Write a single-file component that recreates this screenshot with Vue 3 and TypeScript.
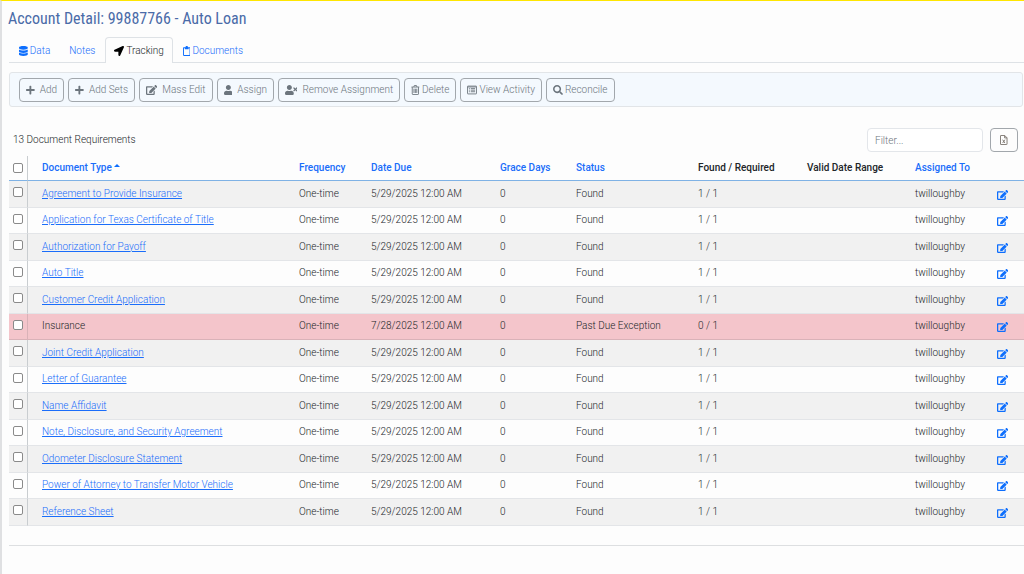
<script setup lang="ts">
import { computed, ref } from 'vue'

interface Icon {
  box: string
  path: string
  stroke?: boolean
}

interface Requirement {
  id: number
  name: string
  due: string
  status: string
  found: string
  exception: boolean
}

const icons: Record<string, Icon> = {
  database: {
    box: '0 0 448 512',
    path: 'M448 73v46C448 159 348 192 224 192S0 159 0 119V73C0 33 100 0 224 0s224 33 224 73zM448 176v103C448 319 348 352 224 352S0 319 0 279V176c48 33 136 49 224 49S400 209 448 176zm0 160v103C448 479 348 512 224 512S0 479 0 439V336c48 33 136 49 224 49S400 369 448 336z',
  },
  arrow: {
    box: '0 0 512 512',
    path: 'M444.52 3.52L28.74 195.42c-47.97 22.39-31.98 92.75 19.19 92.75h175.91v175.91c0 51.17 70.36 67.17 92.75 19.19l191.9-415.78c15.99-38.39-25.59-79.97-63.97-63.97z',
  },
  clipboard: {
    box: '0 0 384 512',
    path: 'M336 64h-80c0-35.3-28.7-64-64-64s-64 28.7-64 64H48C21.5 64 0 85.5 0 112v352c0 26.5 21.5 48 48 48h288c26.5 0 48-21.5 48-48V112c0-26.5-21.5-48-48-48zm-6 400H54c-3.3 0-6-2.7-6-6V118c0-3.3 2.7-6 6-6h42v36c0 6.6 5.4 12 12 12h168c6.6 0 12-5.4 12-12v-36h42c3.3 0 6 2.7 6 6v340c0 3.3-2.7 6-6 6z',
  },
  plus: {
    box: '0 0 448 512',
    path: 'M416 208H272V64c0-17.7-14.3-32-32-32h-32c-17.7 0-32 14.3-32 32v144H32c-17.7 0-32 14.3-32 32v32c0 17.7 14.3 32 32 32h144v144c0 17.7 14.3 32 32 32h32c17.7 0 32-14.3 32-32V304h144c17.7 0 32-14.3 32-32v-32c0-17.7-14.3-32-32-32z',
  },
  edit: {
    box: '0 0 576 512',
    path: 'M402.6 83.2l90.2 90.2c3.8 3.8 3.8 10 0 13.8L274.4 405.6l-92.8 10.3c-12.4 1.4-22.9-9.1-21.5-21.5l10.3-92.8L388.8 83.2c3.8-3.8 10-3.8 13.8 0zm162-22.9l-48.8-48.8c-15.2-15.2-39.9-15.2-55.2 0l-35.4 35.4c-3.8 3.8-3.8 10 0 13.8l90.2 90.2c3.8 3.8 10 3.8 13.8 0l35.4-35.4c15.2-15.3 15.2-40 0-55.2zM384 346.2V448H64V128h229.8c3.2 0 6.2-1.3 8.5-3.5l40-40c7.6-7.6 2.2-20.5-8.5-20.5H48C21.5 64 0 85.5 0 112v352c0 26.5 21.5 48 48 48h352c26.5 0 48-21.5 48-48V306.2c0-10.7-12.9-16-20.5-8.5l-40 40c-2.2 2.3-3.5 5.3-3.5 8.5z',
  },
  user: {
    box: '0 0 448 512',
    path: 'M224 256c70.7 0 128-57.3 128-128S294.7 0 224 0 96 57.3 96 128s57.3 128 128 128zm89.6 32h-16.7c-22.2 10.2-46.9 16-72.9 16s-50.6-5.8-72.9-16h-16.7C60.2 288 0 348.2 0 422.4V464c0 26.5 21.5 48 48 48h352c26.5 0 48-21.5 48-48v-41.6c0-74.2-60.2-134.4-134.4-134.4z',
  },
  userTimes: {
    box: '0 0 640 512',
    path: 'M224 256c70.7 0 128-57.3 128-128S294.7 0 224 0 96 57.3 96 128s57.3 128 128 128zm89.6 32h-16.7c-22.2 10.2-46.9 16-72.9 16s-50.6-5.8-72.9-16h-16.7C60.2 288 0 348.2 0 422.4V464c0 26.5 21.5 48 48 48h352c26.5 0 48-21.5 48-48v-41.6c0-74.2-60.2-134.4-134.4-134.4zM577 224l55-54c10-10 10-22 0-32l-16-16c-10-10-22-10-32 0l-54 55-54-55c-10-10-22-10-32 0l-16 16c-10 10-10 22 0 32l55 54-55 54c-10 10-10 22 0 32l16 16c10 10 22 10 32 0l54-55 54 55c10 10 22 10 32 0l16-16c10-10 10-22 0-32z',
  },
  trash: {
    box: '0 0 448 512',
    path: 'M24 104H424M144 100L168 28H280L304 100M64 108V456Q64 488 96 488H352Q384 488 384 456V108M152 190V408M224 190V408M296 190V408',
    stroke: true,
  },
  list: {
    box: '0 0 512 512',
    path: 'M48 56H464Q488 56 488 80V432Q488 456 464 456H48Q24 456 24 432V80Q24 56 48 56ZM24 100H488M96 184H144M96 264H144M96 344H144M192 184H416M192 264H416M192 344H416',
    stroke: true,
  },
  search: {
    box: '0 0 512 512',
    path: 'M505 442.7L405.3 343c-4.5-4.5-10.6-7-17-7H372c27.6-35.3 44-79.7 44-128C416 93.1 322.9 0 208 0S0 93.1 0 208s93.1 208 208 208c48.3 0 92.7-16.4 128-44v16.3c0 6.4 2.5 12.5 7 17l99.7 99.7c9.4 9.4 24.6 9.4 33.9 0l28.3-28.3c9.4-9.4 9.4-24.6.1-34zM208 336c-70.7 0-128-57.2-128-128 0-70.7 57.2-128 128-128 70.7 0 128 57.2 128 128 0 70.7-57.2 128-128 128z',
  },
  excel: {
    box: '0 0 384 512',
    path: 'M24 48Q24 24 48 24H240L360 144V464Q360 488 336 488H48Q24 488 24 464ZM236 28V148H356M136 240L248 408M248 240L136 408',
    stroke: true,
  },
}

const tabs = [
  { label: 'Data', icon: 'database', active: false },
  { label: 'Notes', icon: '', active: false },
  { label: 'Tracking', icon: 'arrow', active: true },
  { label: 'Documents', icon: 'clipboard', active: false },
]

const actions = [
  { label: 'Add', icon: 'plus', tight: false },
  { label: 'Add Sets', icon: 'plus', tight: false },
  { label: 'Mass Edit', icon: 'edit', tight: false },
  { label: 'Assign', icon: 'user', tight: false },
  { label: 'Remove Assignment', icon: 'userTimes', tight: false },
  { label: 'Delete', icon: 'trash', tight: true },
  { label: 'View Activity', icon: 'list', tight: true },
  { label: 'Reconcile', icon: 'search', tight: true },
]

const names = [
  'Agreement to Provide Insurance',
  'Application for Texas Certificate of Title',
  'Authorization for Payoff',
  'Auto Title',
  'Customer Credit Application',
  'Insurance',
  'Joint Credit Application',
  'Letter of Guarantee',
  'Name Affidavit',
  'Note, Disclosure, and Security Agreement',
  'Odometer Disclosure Statement',
  'Power of Attorney to Transfer Motor Vehicle',
  'Reference Sheet',
]

const requirements: Requirement[] = names.map((name, id) => {
  const exception = name === 'Insurance'
  return {
    id,
    name,
    exception,
    due: exception ? '7/28/2025 12:00 AM' : '5/29/2025 12:00 AM',
    status: exception ? 'Past Due Exception' : 'Found',
    found: exception ? '0 / 1' : '1 / 1',
  }
})

const filter = ref('')
const selected = ref<number[]>([])

const visible = computed(() =>
  requirements.filter((r) => r.name.toLowerCase().includes(filter.value.toLowerCase())),
)

function toggleAll(event: Event) {
  const checked = (event.target as HTMLInputElement).checked
  selected.value = checked ? visible.value.map((r) => r.id) : []
}
</script>

<template>
  <main class="page">
    <h1 class="title">Account Detail: 99887766 - Auto Loan</h1>

    <nav class="tabs">
      <a v-for="tab in tabs" :key="tab.label" href="#" class="tab" :class="{ active: tab.active }">
        <svg v-if="tab.icon" class="icon" :viewBox="icons[tab.icon].box" aria-hidden="true">
          <path :d="icons[tab.icon].path" />
        </svg>
        <span>{{ tab.label }}</span>
      </a>
    </nav>

    <div class="toolbar">
      <button
        v-for="action in actions"
        :key="action.label"
        type="button"
        class="action"
        :class="{ tight: action.tight }"
      >
        <svg
          class="icon"
          :class="{ outline: icons[action.icon].stroke }"
          :viewBox="icons[action.icon].box"
          aria-hidden="true"
        >
          <path :d="icons[action.icon].path" />
        </svg>
        <span>{{ action.label }}</span>
      </button>
    </div>

    <div class="summary">
      <span class="count">{{ requirements.length }} Document Requirements</span>
      <input v-model="filter" class="filter" type="text" placeholder="Filter..." aria-label="Filter" />
      <button type="button" class="export" aria-label="Export to Excel">
        <svg class="icon outline" :viewBox="icons.excel.box" aria-hidden="true">
          <path :d="icons.excel.path" />
        </svg>
      </button>
    </div>

    <table class="grid">
      <colgroup>
        <col class="c-check" />
        <col />
        <col class="c-frequency" />
        <col class="c-due" />
        <col class="c-grace" />
        <col class="c-status" />
        <col class="c-found" />
        <col class="c-range" />
        <col class="c-assigned" />
        <col class="c-edit" />
      </colgroup>
      <thead>
        <tr>
          <th class="check"><input type="checkbox" aria-label="Select all" @change="toggleAll" /></th>
          <th class="name">
            <a href="#">Document Type
              <svg class="caret" viewBox="0 0 6 3" aria-hidden="true"><path d="M0 3L3 0L6 3Z" /></svg>
            </a>
          </th>
          <th><a href="#">Frequency</a></th>
          <th><a href="#">Date Due</a></th>
          <th><a href="#">Grace Days</a></th>
          <th><a href="#">Status</a></th>
          <th>Found / Required</th>
          <th>Valid Date Range</th>
          <th><a href="#">Assigned To</a></th>
          <th></th>
        </tr>
      </thead>
      <tbody>
        <tr v-for="row in visible" :key="row.id" :class="{ exception: row.exception }">
          <td class="check">
            <input v-model="selected" type="checkbox" :value="row.id" :aria-label="row.name" />
          </td>
          <td class="name">
            <span v-if="row.exception">{{ row.name }}</span>
            <a v-else href="#">{{ row.name }}</a>
          </td>
          <td>One-time</td>
          <td>{{ row.due }}</td>
          <td>0</td>
          <td>{{ row.status }}</td>
          <td>{{ row.found }}</td>
          <td></td>
          <td>twilloughby</td>
          <td class="tools">
            <button type="button" class="edit" :aria-label="'Edit ' + row.name">
              <svg class="icon" :viewBox="icons.edit.box" aria-hidden="true">
                <path :d="icons.edit.path" />
              </svg>
            </button>
          </td>
        </tr>
      </tbody>
    </table>

    <hr class="rule" />
  </main>
</template>

<style>
body {
  margin: 0;
  background: #fdfdfd;
}
</style>

<style scoped>
.page {
  box-sizing: border-box;
  min-height: 100vh;
  padding: 8px 0 0 6px;
  border-top: 1px solid #ffe600;
  border-left: 2px solid #dfe0e2;
  color: #212529;
  font: 300 10px/16px Roboto, "Liberation Sans", sans-serif;
}

.page * {
  box-sizing: border-box;
}

.icon {
  display: block;
  height: 10px;
  fill: currentColor;
}

.icon.outline {
  fill: none;
  stroke: currentColor;
  stroke-width: 46px;
}

a {
  color: #1a6dfa;
}

button,
input {
  margin: 0;
  font: inherit;
}

.title {
  margin: 0;
  color: #4a6ba8;
  font: 400 16px/20px "Roboto Condensed", Lato, sans-serif;
}

.tabs {
  display: flex;
  gap: 1px;
  height: 34px;
  margin-left: 1px;
  padding: 8px 0 0 1px;
  border-bottom: 1px solid #dee2e6;
}

.tab {
  display: flex;
  align-items: center;
  gap: 2px;
  height: 26px;
  padding: 0 8px;
  border: 1px solid transparent;
  border-bottom: 0;
  border-radius: 4px 4px 0 0;
  text-decoration: none;
}

.tab .icon {
  color: #0d6efd;
}

.tab.active {
  border-color: #dee2e6;
  background: #fdfdfd;
  color: #212529;
}

.tab.active .icon {
  color: #000;
}

.toolbar {
  display: flex;
  align-items: center;
  gap: 4px;
  height: 35px;
  margin: 9px 1px 0;
  padding: 0 9px;
  border: 1px solid #e2e5e8;
  border-radius: 3px;
  background: #f4f9fe;
}

.action {
  display: flex;
  align-items: center;
  gap: 5px;
  height: 24px;
  padding: 0 6px;
  border: 1px solid #a2a7ac;
  border-radius: 4px;
  background: transparent;
  color: #6c757d;
}

.action.tight {
  gap: 2px;
}

.summary {
  display: flex;
  align-items: center;
  gap: 7px;
  margin-top: 21px;
  padding: 0 6px 0 5px;
}

.count {
  flex: 1;
}

.filter {
  width: 116px;
  height: 24px;
  padding: 0 7px;
  border: 1px solid #e3e6ea;
  border-radius: 4px;
  background: #fff;
  color: #212529;
}

.filter::placeholder {
  color: #6c757d;
}

.export {
  display: flex;
  align-items: center;
  justify-content: center;
  width: 28px;
  height: 24px;
  padding: 0;
  border: 1px solid #a2a7ac;
  border-radius: 4px;
  background: transparent;
  color: #77706a;
}

.grid {
  width: calc(100% - 1px);
  margin: 4px 0 0 1px;
  border-spacing: 0;
  table-layout: fixed;
}

.c-check { width: 19px; }
.c-frequency { width: 72px; }
.c-due { width: 129px; }
.c-grace { width: 76px; }
.c-status { width: 122px; }
.c-found { width: 109px; }
.c-range { width: 108px; }
.c-assigned { width: 83px; }
.c-edit { width: 34px; }

th,
td {
  height: 26px;
  padding: 0 8px 1px;
  border-bottom: 1px solid #e3e5e8;
  text-align: left;
  white-space: nowrap;
}

th {
  height: 25px;
  padding-bottom: 0;
  border-color: #7fb2e5;
  font-weight: 500;
}

th a {
  text-decoration: none;
}

.check {
  padding: 0 0 0 4px;
  border-right: 1px solid #c9cdd0;
}

.name {
  padding-left: 14px;
}

.check input {
  display: block;
  width: 10px;
  height: 10px;
  border: 1px solid #8a8a8a;
  border-radius: 2px;
  background: #fff;
  appearance: none;
}

td.check input {
  margin-bottom: 4px;
}

.check input:checked {
  background: #0d6efd;
}

.caret {
  display: inline-block;
  width: 6px;
  height: 3px;
  vertical-align: 4px;
  fill: #0d6efd;
}

tbody tr:nth-child(odd) td {
  height: 27px;
  background: #f1f1f1;
}

tbody tr.exception td {
  border-color: #d9b2b8;
  background: #f4c5cb;
}

.tools {
  padding-left: 7px;
}

.edit {
  display: block;
  margin-top: 2px;
  padding: 0;
  border: 0;
  background: none;
  color: #0d6efd;
}

.rule {
  margin: 19px 0 0 1px;
  border: 0;
  border-top: 1px solid #dddfe1;
}
</style>
